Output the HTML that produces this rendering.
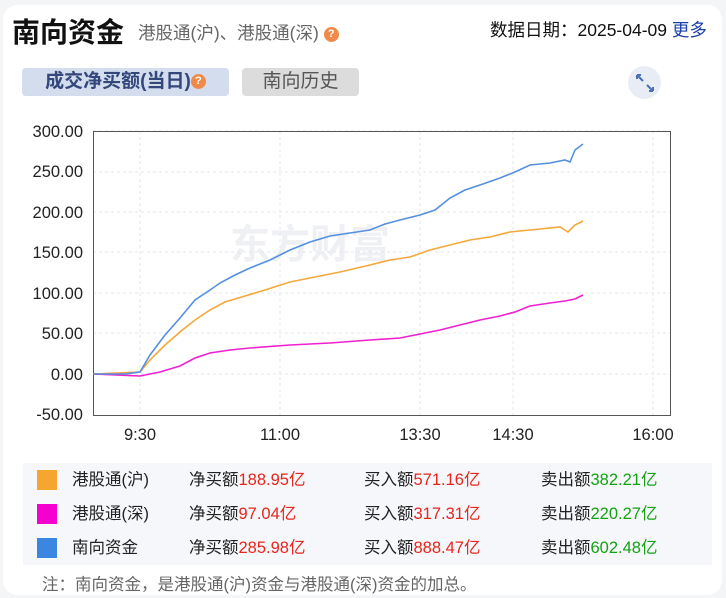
<!DOCTYPE html>
<html><head><meta charset="utf-8"><style>
body{margin:0;background:#f4f5f7;font-family:"Liberation Sans","Noto Sans CJK SC",sans-serif;}
.card{position:absolute;left:3px;top:5px;width:719px;height:590px;background:#fff;border-radius:14px;}
.abs{position:absolute;white-space:nowrap;}
.q{display:inline-block;width:15px;height:15px;border-radius:50%;background:#f08a4b;color:#fff;font-size:11px;text-align:center;line-height:15px;font-weight:bold;vertical-align:middle;}
.leg{position:absolute;left:23px;top:463px;width:689px;height:102px;background:#f5f7fa;}
.row{position:absolute;left:0;height:34px;font-size:16.5px;line-height:34px;color:#222;width:689px;}
.sq{position:absolute;left:14px;top:7px;width:20px;height:20px;}
.r{color:#e8251d}.g{color:#13a313}
</style></head><body>
<div class="card"></div>
<div class="abs" style="left:12px;top:11px;font-size:28px;font-weight:bold;color:#111;">南向资金</div>
<div class="abs" style="left:138px;top:20px;font-size:17.5px;color:#666;">港股通(沪)、港股通(深) <span class="q">?</span></div>
<div class="abs" style="left:490px;top:17px;font-size:17.5px;color:#111;">数据日期：2025-04-09 <span style="color:#1a3fa8">更多</span></div>
<div class="abs" style="left:22px;top:68px;width:207px;height:28px;background:#d3ddee;border-radius:4px;text-align:center;line-height:28px;font-size:19px;font-weight:bold;color:#33477a;">成交净买额(当日)<span class="q">?</span></div>
<div class="abs" style="left:242px;top:68px;width:117px;height:28px;background:#dcdcdc;border-radius:4px;text-align:center;line-height:28px;font-size:19px;color:#555;">南向历史</div>
<div class="abs" style="left:628px;top:66px;width:33px;height:33px;border-radius:50%;background:#e8ecf4;"></div>
<svg class="abs" style="left:0;top:0" width="726" height="598">
<g stroke="#4a6fb5" stroke-width="2" fill="none"><path d="M637 75l6 6M637 75h4M637 75v4M653 91l-6-6M653 91h-4M653 91v-4"/></g>
<text x="230" y="258" font-size="40" font-weight="bold" fill="#eef0f3" font-family="Liberation Sans,Noto Sans CJK SC,sans-serif">东方财富</text>
<g stroke="#e3e8ef" stroke-dasharray="3,3" stroke-width="1">
<path d="M93 131H670M93 172H670M93 212H670M93 252H670M93 293H670M93 333H670M93 374H670M140 131V415M280 131V415M420 131V415M513 131V415M653 131V415"/></g>
<rect x="93.5" y="131.5" width="577" height="284" fill="none" stroke="#555" stroke-width="1"/>
<g font-size="16.5" fill="#222" text-anchor="end" font-family="Liberation Sans,sans-serif">
<text x="83" y="137">300.00</text><text x="83" y="177">250.00</text><text x="83" y="218">200.00</text><text x="83" y="258">150.00</text><text x="83" y="299">100.00</text><text x="83" y="339">50.00</text><text x="83" y="380">0.00</text><text x="83" y="420">-50.00</text></g>
<g font-size="16.5" fill="#222" text-anchor="middle" font-family="Liberation Sans,sans-serif">
<text x="140" y="440">9:30</text><text x="280" y="440">11:00</text><text x="420" y="440">13:30</text><text x="513" y="440">14:30</text><text x="653" y="440">16:00</text></g>
<polyline fill="none" stroke="#f4a83a" stroke-width="1.6" points="93,374 140,372 150,360 165,345 180,332 195,320 210,310 225,302 245,296 265,290 290,282 310,278 340,272 370,265 390,260 410,257 430,250 450,245 470,240 490,237 510,232 530,230 560,227 568,232 575,225 583,221"/>
<polyline fill="none" stroke="#f020d0" stroke-width="1.6" points="93,374 140,376 160,372 180,366 195,358 210,353 230,350 250,348 290,345 330,343 370,340 400,338 420,334 440,330 460,325 480,320 500,316 515,312 530,306 550,303 565,301 575,299 583,295"/>
<polyline fill="none" stroke="#5590e0" stroke-width="1.6" points="93,374 125,374 140,372 150,355 165,335 180,318 195,300 210,290 220,283 235,275 250,268 270,260 290,250 310,242 330,236 350,233 370,230 385,224 400,220 420,215 435,210 450,198 465,190 480,185 500,178 515,172 530,165 550,163 565,160 570,162 575,150 583,144"/>
</svg>
<div class="leg">
<div class="row" style="top:0"><div class="sq" style="background:#f4a62f"></div><span class="abs" style="left:49px">港股通(沪)</span><span class="abs" style="left:166px">净买额<span class="r">188.95亿</span></span><span class="abs" style="left:341px">买入额<span class="r">571.16亿</span></span><span class="abs" style="left:518px">卖出额<span class="g">382.21亿</span></span></div>
<div class="row" style="top:34px"><div class="sq" style="background:#f500d0"></div><span class="abs" style="left:49px">港股通(深)</span><span class="abs" style="left:166px">净买额<span class="r">97.04亿</span></span><span class="abs" style="left:341px">买入额<span class="r">317.31亿</span></span><span class="abs" style="left:518px">卖出额<span class="g">220.27亿</span></span></div>
<div class="row" style="top:68px"><div class="sq" style="background:#3a86e0"></div><span class="abs" style="left:49px">南向资金</span><span class="abs" style="left:166px">净买额<span class="r">285.98亿</span></span><span class="abs" style="left:341px">买入额<span class="r">888.47亿</span></span><span class="abs" style="left:518px">卖出额<span class="g">602.48亿</span></span></div>
</div>
<div class="abs" style="left:42px;top:571px;font-size:16.5px;color:#666;">注：南向资金，是港股通(沪)资金与港股通(深)资金的加总。</div>
</body></html>
